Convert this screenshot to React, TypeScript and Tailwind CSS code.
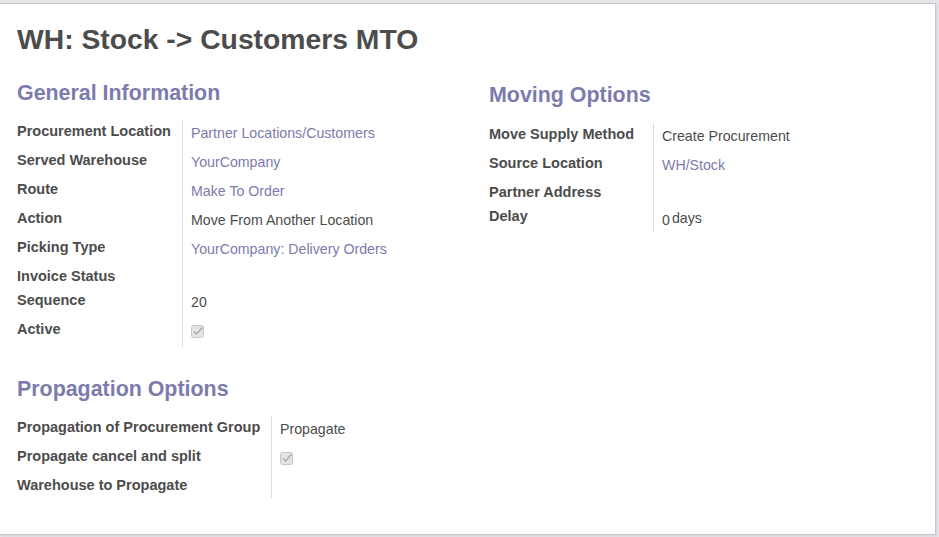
type Field = {
  label: string;
  value?: string;
  link?: boolean;
  check?: boolean;
  days?: boolean;
  h?: string;
};

const general: Field[] = [
  { label: 'Procurement Location', value: 'Partner Locations/Customers', link: true },
  { label: 'Served Warehouse', value: 'YourCompany', link: true },
  { label: 'Route', value: 'Make To Order', link: true },
  { label: 'Action', value: 'Move From Another Location' },
  { label: 'Picking Type', value: 'YourCompany: Delivery Orders', link: true },
  { label: 'Invoice Status', h: 'h-[24px]' },
  { label: 'Sequence', value: '20' },
  { label: 'Active', check: true },
];

const moving: Field[] = [
  { label: 'Move Supply Method', value: 'Create Procurement' },
  { label: 'Source Location', value: 'WH/Stock', link: true },
  { label: 'Partner Address', h: 'h-[24px]' },
  { label: 'Delay', days: true, h: 'h-[28px]' },
];

const propagation: Field[] = [
  { label: 'Propagation of Procurement Group', value: 'Propagate' },
  { label: 'Propagate cancel and split', check: true },
  { label: 'Warehouse to Propagate', h: 'h-[24px]' },
];

function Checkbox() {
  return (
    <svg width="13" height="13" viewBox="0 0 13 13" className="mt-[7px]">
      <rect x="0.5" y="0.5" width="12" height="12" rx="2" fill="#e4e4e4" stroke="#c6c6c6" />
      <path d="M3 6.5 L5.5 9 L11.5 2.5" fill="none" stroke="#a9a9a9" strokeWidth="1.4" />
    </svg>
  );
}

function FieldTable({ rows, labelWidth }: { rows: Field[]; labelWidth: string }) {
  return (
    <div className="flex flex-col">
      {rows.map((r) => (
        <div key={r.label} className={`flex ${r.h ?? 'h-[29px]'}`}>
          <div className={`${labelWidth} shrink-0 border-r border-[#dcdcdc] pt-[1px] text-[14.5px] leading-5 font-bold text-[#4c4c4c]`}>
            {r.label}
          </div>
          <div className="pl-[8px] text-[14.2px] leading-5">
            {r.check ? (
              <Checkbox />
            ) : r.days ? (
              <div className="pt-[3px] text-[#4c4c4c]">
                <span className="align-[-2px]">0</span>
                <span className="ml-[2px]">days</span>
              </div>
            ) : r.value ? (
              <div className={`pt-[3px] ${r.link ? 'text-[#7c7bad]' : 'text-[#4c4c4c]'}`}>{r.value}</div>
            ) : null}
          </div>
        </div>
      ))}
    </div>
  );
}

function Heading({ children }: { children: string }) {
  return <h2 className="text-[21.4px] leading-[28px] font-bold text-[#7c7bad]">{children}</h2>;
}

export default function App() {
  return (
    <div
      className="w-[939px] h-[537px] bg-[#e6e6ea] pt-[3px] pr-[3px] pb-[2px]"
      style={{ fontFamily: '"Liberation Sans", Arial, sans-serif' }}
    >
      <div className="h-[532px] bg-white border-t border-r border-b border-[#c8c8cc] shadow-[1px_1px_2px_rgba(0,0,0,0.08)] pl-[17px] pt-[19px]">
        <h1 className="text-[28.3px] leading-[32px] font-bold text-[#4c4c4c]">WH: Stock -&gt; Customers MTO</h1>

        <div className="grid grid-cols-[472px_1fr] mt-[24px]">
          <div>
            <Heading>General Information</Heading>
            <div className="mt-[13px]">
              <FieldTable rows={general} labelWidth="w-[166px]" />
            </div>
          </div>
          <div className="pt-[2px]">
            <Heading>Moving Options</Heading>
            <div className="mt-[14px]">
              <FieldTable rows={moving} labelWidth="w-[165px]" />
            </div>
          </div>
        </div>

        <div className="mt-[28px]">
          <Heading>Propagation Options</Heading>
          <div className="mt-[13px]">
            <FieldTable rows={propagation} labelWidth="w-[255px]" />
          </div>
        </div>
      </div>
    </div>
  );
}
